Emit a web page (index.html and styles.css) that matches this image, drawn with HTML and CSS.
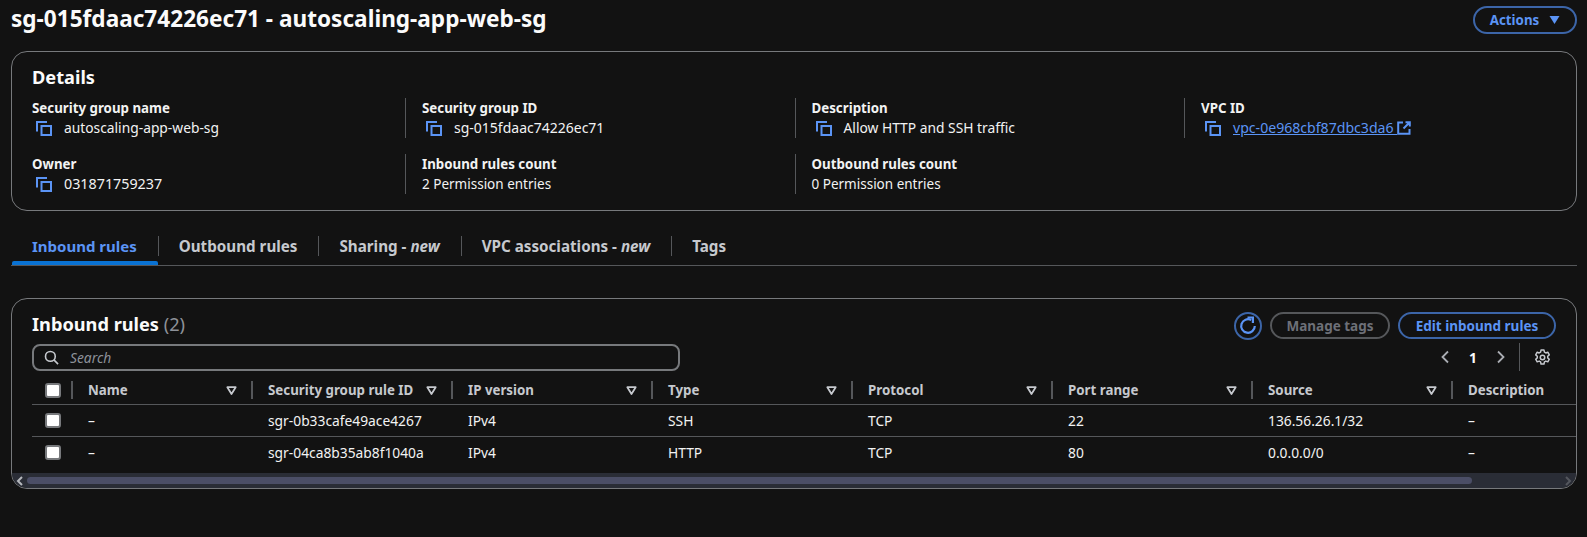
FILE: index.html
```html
<!DOCTYPE html>
<html>
<head>
  <title>Security group</title>
  <link rel="stylesheet" href="styles.css">
</head>
<body>
  <svg class="defs" width="0" height="0">
    <symbol id="copy" viewBox="0 0 16 15"><path d="M1 10.500V1h10" fill="none" stroke="currentColor" stroke-width="2"/><path d="M5.500 5h9.500v9H5.500z" fill="none" stroke="currentColor" stroke-width="2"/></symbol>
    <symbol id="caret" viewBox="0 0 10 10"><path d="M1.200 2h7.600L5 8.200z" fill="none" stroke="currentColor" stroke-width="1.600" stroke-linejoin="round"/></symbol>
  </svg>

  <header class="page-head">
    <h1>sg-015fdaac74226ec71 - autoscaling-app-web-sg</h1>
    <button class="btn btn-actions">Actions <svg class="solid-caret" viewBox="0 0 10 8"><path d="M0 0h10L5 8z" fill="currentColor"/></svg></button>
  </header>

  <section class="card details">
    <h2>Details</h2>
    <div class="detail-grid">
      <div class="field">
        <div class="label">Security group name</div>
        <div class="value"><svg class="copy"><use href="#copy"/></svg>autoscaling-app-web-sg</div>
      </div>
      <div class="field sep">
        <div class="label">Security group ID</div>
        <div class="value num"><svg class="copy"><use href="#copy"/></svg>sg-015fdaac74226ec71</div>
      </div>
      <div class="field sep">
        <div class="label">Description</div>
        <div class="value"><svg class="copy"><use href="#copy"/></svg>Allow HTTP and SSH traffic</div>
      </div>
      <div class="field sep">
        <div class="label">VPC ID</div>
        <div class="value"><svg class="copy"><use href="#copy"/></svg><a href="#">vpc-0e968cbf87dbc3da6 <svg class="ext" viewBox="0 0 14 14"><path d="M6 1.500H1.200v11.300h11.300V8M8.500 1.200h4.300v4.300M12.500 1.500L6.500 7.500" fill="none" stroke="currentColor" stroke-width="2"/></svg></a></div>
      </div>
      <div class="field">
        <div class="label">Owner</div>
        <div class="value owner"><svg class="copy"><use href="#copy"/></svg>031871759237</div>
      </div>
      <div class="field sep">
        <div class="label">Inbound rules count</div>
        <div class="value entries">2 Permission entries</div>
      </div>
      <div class="field sep">
        <div class="label">Outbound rules count</div>
        <div class="value entries">0 Permission entries</div>
      </div>
    </div>
  </section>

  <nav class="tabs">
    <a class="tab active">Inbound rules</a>
    <a class="tab">Outbound rules</a>
    <a class="tab">Sharing - <i>new</i></a>
    <a class="tab">VPC associations - <i>new</i></a>
    <a class="tab">Tags</a>
  </nav>

  <section class="card rules">
    <div class="rules-head">
      <h2>Inbound rules <span class="count">(2)</span></h2>
      <div class="rules-actions">
        <button class="btn-round"><svg viewBox="0 0 20 20"><path d="M16.800 10A6.800 6.800 0 1 1 13.200 4" fill="none" stroke="currentColor" stroke-width="2.200"/><path d="M9.500 1.500h5.400v5.400" fill="none" stroke="currentColor" stroke-width="2.200"/></svg></button>
        <button class="btn btn-off">Manage tags</button>
        <button class="btn btn-edit">Edit inbound rules</button>
      </div>
    </div>
    <div class="filter-row">
      <div class="search">
        <svg viewBox="0 0 16 16"><circle cx="6.800" cy="6.800" r="5.200" fill="none" stroke="currentColor" stroke-width="1.700"/><path d="M10.600 10.600l4.400 4.400" stroke="currentColor" stroke-width="1.700"/></svg>
        <span>Search</span>
      </div>
      <div class="pager">
        <svg class="chev" viewBox="0 0 10 14"><path d="M8 1.500L2.500 7 8 12.500" fill="none" stroke="currentColor" stroke-width="1.800"/></svg>
        <b>1</b>
        <svg class="chev" viewBox="0 0 10 14"><path d="M2 1.500L7.500 7 2 12.500" fill="none" stroke="currentColor" stroke-width="1.800"/></svg>
        <div class="pager-line"></div>
        <svg class="gear" viewBox="0 0 16 16"><path d="M6.600 1h2.800l.4 2 1.300.7 1.900-.7 1.400 2.500-1.500 1.300v1.500l1.500 1.300-1.400 2.500-1.900-.7-1.300.7-.4 2H6.600l-.4-2-1.300-.7-1.900.7L1.600 9.600l1.500-1.300V6.800L1.600 5.500 3 3l1.900.7 1.300-.7z" fill="none" stroke="currentColor" stroke-width="1.400" stroke-linejoin="round"/><circle cx="8" cy="8" r="2.100" fill="none" stroke="currentColor" stroke-width="1.400"/></svg>
      </div>
    </div>
    <div class="table">
      <div class="row head">
        <div class="cell check"><span class="box"></span></div>
        <div class="cell name">Name<svg class="caret"><use href="#caret"/></svg></div>
        <div class="cell col">Security group rule ID<svg class="caret"><use href="#caret"/></svg></div>
        <div class="cell col">IP version<svg class="caret"><use href="#caret"/></svg></div>
        <div class="cell col">Type<svg class="caret"><use href="#caret"/></svg></div>
        <div class="cell col">Protocol<svg class="caret"><use href="#caret"/></svg></div>
        <div class="cell col">Port range<svg class="caret"><use href="#caret"/></svg></div>
        <div class="cell col">Source<svg class="caret"><use href="#caret"/></svg></div>
        <div class="cell desc">Description</div>
      </div>
      <div class="row">
        <div class="cell check"><span class="box"></span></div>
        <div class="cell name">–</div>
        <div class="cell col">sgr-0b33cafe49ace4267</div>
        <div class="cell col">IPv4</div>
        <div class="cell col">SSH</div>
        <div class="cell col">TCP</div>
        <div class="cell col">22</div>
        <div class="cell col">136.56.26.1/32</div>
        <div class="cell desc">–</div>
      </div>
      <div class="row">
        <div class="cell check"><span class="box"></span></div>
        <div class="cell name">–</div>
        <div class="cell col">sgr-04ca8b35ab8f1040a</div>
        <div class="cell col">IPv4</div>
        <div class="cell col">HTTP</div>
        <div class="cell col">TCP</div>
        <div class="cell col">80</div>
        <div class="cell col">0.0.0.0/0</div>
        <div class="cell desc">–</div>
      </div>
    </div>
    <div class="scrollbar">
      <svg class="sb-arrow" viewBox="0 0 8 10"><path d="M6 1L2 5l4 4" fill="none" stroke="currentColor" stroke-width="2"/></svg>
      <div class="sb-thumb"></div>
      <svg class="sb-arrow dim" viewBox="0 0 8 10"><path d="M2 1l4 4-4 4" fill="none" stroke="currentColor" stroke-width="2"/></svg>
    </div>
  </section>
</body>
</html>
```

FILE: styles.css
```css
* { box-sizing: border-box; }
html, body { height: 100%; }
body { margin: 0; padding: 0 10px 0 11px; background: #121212; color: #f2f3f3; font-family: "Noto Sans", sans-serif; font-size: 13.8px; overflow: hidden; }
.defs { position: absolute; }

.page-head { display: flex; justify-content: space-between; align-items: flex-start; height: 51px; }
h1 { margin: 0; font-size: 22.6px; line-height: 38px; font-weight: 700; color: #fbfbfb; }
.btn { height: 27px; padding: 0; border: 2px solid #3c65a8; border-radius: 14px; background: none; color: #5b94f5; font: 700 13.5px "Noto Sans", sans-serif; }
.btn-actions { width: 104px; margin-top: 6px; height: 28px; font-size: 13.3px; display: flex; align-items: center; justify-content: center; gap: 10px; }
.solid-caret { width: 11px; height: 8px; }
.btn-off { width: 120px; border-color: #55575a; color: #6d7078; }
.btn-edit { width: 158px; }

.card { border: 1px solid #77797c; border-radius: 16px; }
.details { height: 160px; padding: 13px 20px 0 20px; }
.card h2 { margin: 0; font-size: 18.2px; line-height: 25px; font-weight: 700; color: #fbfbfb; }
.detail-grid { display: grid; grid-template-columns: 373px 389.5px 389.5px 1fr; row-gap: 16px; margin-top: 8px; }
.field { height: 40px; line-height: 20px; }
.field.sep { border-left: 1px solid #55575a; padding-left: 16px; }
.label { font-weight: 700; font-size: 13.3px; }
.value { display: flex; align-items: center; height: 20px; }
.value.num { font-size: 14px; }
.value.owner { font-size: 14.3px; }
.value.entries { font-size: 13.5px; }
.copy { width: 16px; height: 15px; margin: 0 12px 0 4px; color: #5b94f5; flex: none; }
.value a { color: #5b94f5; text-decoration: underline; font-size: 14.1px; white-space: pre; }
.ext { width: 14px; height: 14px; vertical-align: -2px; }

.tabs { display: flex; height: 55px; padding-top: 15px; border-bottom: 1px solid #55575a; }
.tab { position: relative; display: flex; align-items: center; padding: 0 21px; font-weight: 700; font-size: 15.2px; color: #c6c9ce; white-space: pre; height: 39px; }
.tab.active { font-size: 15px; }
.tab + .tab::before { content: ""; position: absolute; left: 0; top: 10px; height: 20px; border-left: 1px solid #55575a; }
.tab.active { color: #5b94f5; }
.tab.active::after { content: ""; position: absolute; left: 1px; right: 0; bottom: 0; height: 4px; background: #0972d3; border-radius: 2px 2px 0 0; }

.rules { margin-top: 32px; height: 191px; padding: 0; display: flex; flex-direction: column; overflow: hidden; }
.rules-head { display: flex; justify-content: space-between; align-items: center; height: 44px; padding: 9px 20px 0 20px; flex: none; }
.rules-head h2 { margin-top: -2px; }
.rules h2 .count { font-weight: 400; color: #8d9199; }
.rules-actions { display: flex; align-items: center; gap: 8px; }
.btn-round { width: 28px; height: 28px; padding: 2px; border: 2px solid #3c65a8; border-radius: 50%; background: none; color: #5b94f5; display: flex; align-items: center; justify-content: center; }
.btn-round svg { width: 20px; height: 20px; }

.filter-row { display: flex; justify-content: space-between; align-items: center; height: 28px; padding: 0 25px 0 20px; flex: none; }
.search { width: 648px; height: 27px; border: 2px solid #77797c; border-radius: 8px; display: flex; align-items: center; padding-left: 10px; gap: 11px; color: #c6c9ce; }
.search svg { width: 15px; height: 15px; }
.search span { font-style: italic; color: #8d9199; }
.pager { display: flex; align-items: center; height: 28px; color: #a9acb2; }
.chev { width: 10px; height: 14px; }
.pager b { width: 46px; text-align: center; color: #fbfbfb; }
.pager-line { height: 28px; border-left: 1px solid #55575a; margin: 0 14px 0 13px; }
.gear { width: 17px; height: 17px; color: #c6c9ce; }

.table { margin: 5px 0 0 20px; flex: none; }
.row { display: flex; height: 32px; align-items: center; border-top: 1px solid #55575a; }
.row.head { height: 28px; border-top: none; font-weight: 700; font-size: 13.3px; color: #c6c9ce; }
.cell { position: relative; height: 100%; display: flex; align-items: center; padding-left: 17px; white-space: nowrap; flex: none; }
.cell.check { width: 39px; padding-left: 13px; }
.box { width: 16px; height: 15px; border: 2px solid #77797c; border-radius: 3px; background: #fff; }
.name { width: 180px; }
.col { width: 200px; }
.desc { flex: 1; }
.head .cell + .cell::before { content: ""; position: absolute; left: 0; top: 5px; height: 18px; border-left: 2px solid #55575a; }
.caret { position: absolute; right: 14px; top: 9px; width: 11px; height: 11px; color: #c6c9ce; }

.scrollbar { margin-top: auto; height: 15px; background: #2a2d36; display: flex; align-items: center; padding: 0 4px; flex: none; }
.sb-arrow { width: 8px; height: 10px; color: #b6b9be; flex: none; }
.sb-arrow.dim { color: #54575e; margin-left: auto; }
.sb-thumb { width: 1445px; height: 7px; margin-left: 3px; background: #4b4e66; border-radius: 4px; }
```
